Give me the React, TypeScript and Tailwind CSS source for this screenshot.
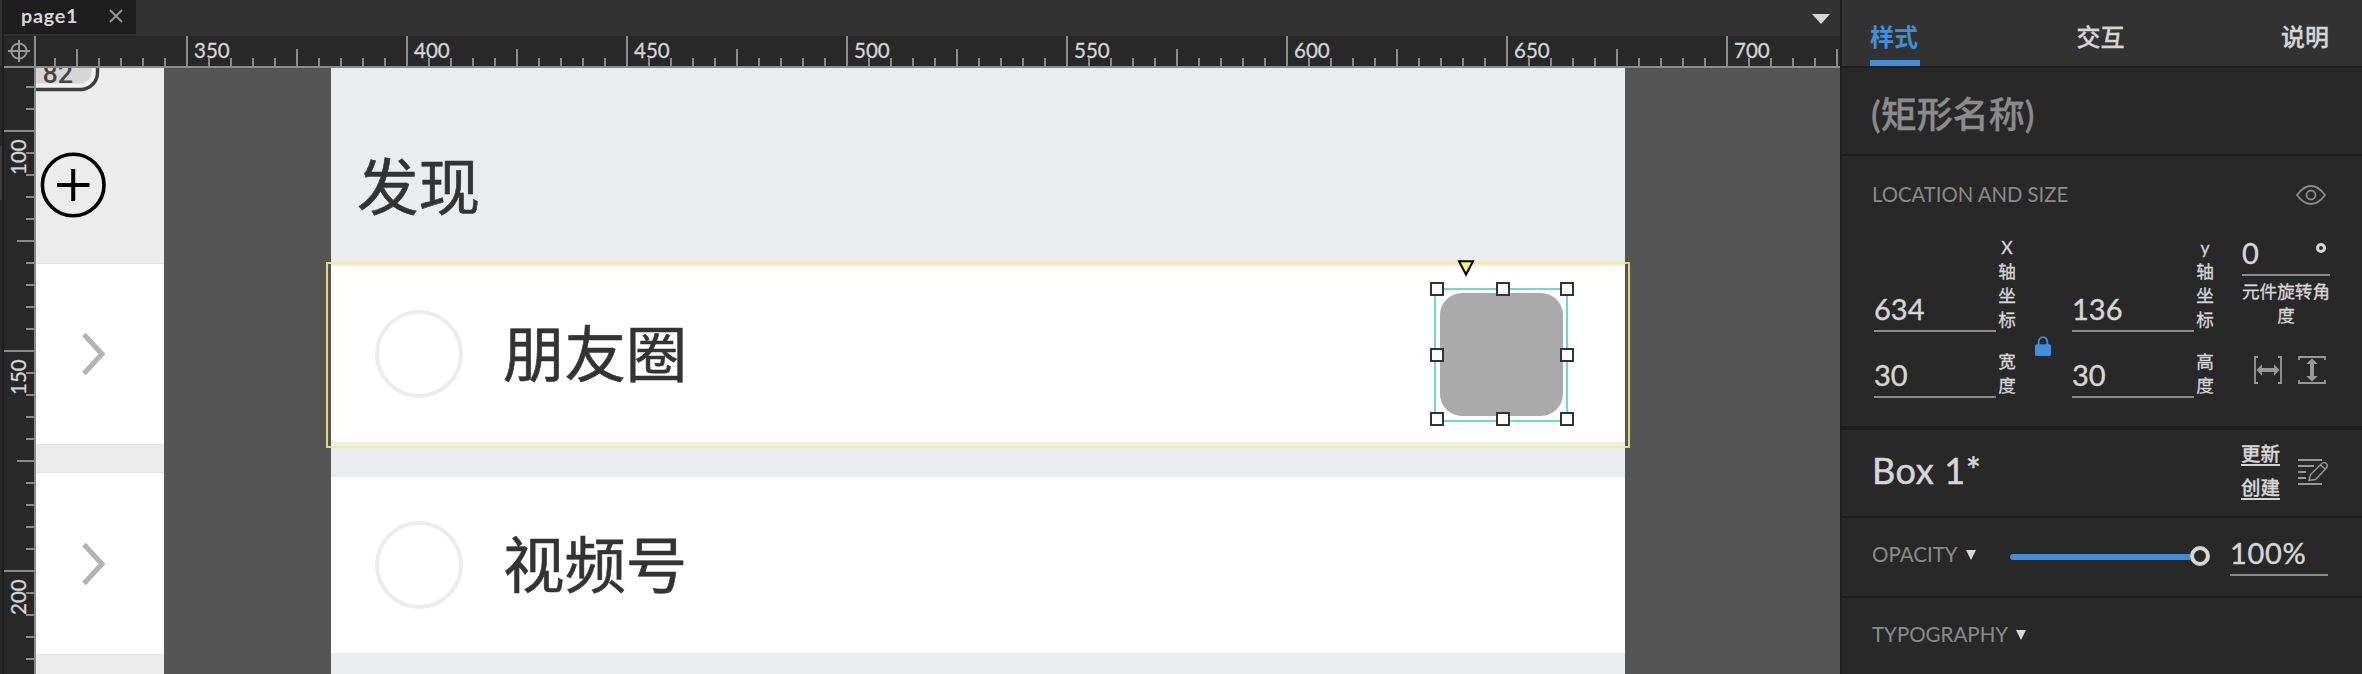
import React from "react";

const LATIN = "font-['Lato','Noto_Sans_CJK_SC',sans-serif]";

function range(from: number, to: number, step: number) {
  const out: number[] = [];
  for (let v = from; v < to; v += step) out.push(v);
  return out;
}

function TopRuler() {
  return (
    <svg width="1836" height="32" viewBox="4 36 1836 32" className="block shrink-0 bg-[#282828]">
      <g stroke="#999999" strokeWidth="2" fill="none">
        <circle cx="19" cy="51" r="7.6" />
        <path d="M8 51H30M19 40V62" />
      </g>
      <rect x="4" y="66" width="1836" height="2" fill="#8b8b8b" />
      <rect x="34" y="36" width="2" height="32" fill="#8b8b8b" />
      {range(54, 1840, 22).map((x, i) => {
        const h = i % 10 === 6 ? 30 : i % 10 === 1 ? 17 : 8;
        return <rect key={x} x={x} y={66 - h} width="2" height={h} fill="#8b8b8b" />;
      })}
      {[350, 400, 450, 500, 550, 600, 650, 700].map((n, i) => (
        <text key={n} x={194 + i * 220} y="58" fontSize="20.5" fill="#d6d6d6" stroke="#d6d6d6" strokeWidth="0.3">
          {n}
        </text>
      ))}
    </svg>
  );
}

function SideRuler() {
  return (
    <svg width="32" height="606" viewBox="4 68 32 606" className="block shrink-0 bg-[#282828]">
      <rect x="34" y="68" width="2" height="606" fill="#8b8b8b" />
      {range(86, 674, 22).map((y, i) => {
        const w = i % 10 === 2 ? 30 : i % 10 === 7 ? 17 : 8;
        return <rect key={y} x={34 - w} y={y} width={w} height="2" fill="#8b8b8b" />;
      })}
      {[100, 150, 200].map((n, i) => (
        <text
          key={n}
          transform={`translate(26.3 ${175 + i * 220}) rotate(-90)`}
          fontSize="20.5"
          fill="#d6d6d6"
          stroke="#d6d6d6"
          strokeWidth="0.3"
        >
          {n}
        </text>
      ))}
    </svg>
  );
}

function Chevron() {
  return (
    <svg width="24" height="44" viewBox="0 0 24 44" className="ml-[45px]" fill="none" stroke="#b3b3b3" strokeWidth="5">
      <path d="M3 2.5L21 22L3 41.5" />
    </svg>
  );
}

function PhoneLeft() {
  return (
    <div className="flex h-full w-[128px] shrink-0 flex-col bg-white">
      <div className="h-[195px] bg-[#ececec]">
        <svg width="128" height="195" viewBox="36 68 128 195" className="block" fill="none">
          <rect x="0" y="45" width="97.5" height="44.5" rx="17" stroke="#3e3e3e" strokeWidth="3.5" fill="#f2f2f2" />
          <rect x="0" y="45" width="92" height="38.5" rx="12" fill="#d6d6d6" />
          <text x="42.5" y="82.8" fontSize="27" fontWeight="500" fill="#444444" fontFamily="Roboto">
            82
          </text>
          <circle cx="73.2" cy="185" r="30.8" stroke="#000" strokeWidth="3.6" />
          <path d="M57 185H89.5M73.2 169V201" stroke="#000" strokeWidth="4" />
        </svg>
      </div>
      <div className="flex h-[181px] items-center border-t border-[#e4e4e4]">
        <Chevron />
      </div>
      <div className="h-[29px] border-y border-[#e2e2e2] bg-[#ececec]" />
      <div className="flex h-[181px] items-center">
        <Chevron />
      </div>
      <div className="h-[20px] border-t border-[#e2e2e2] bg-[#ececec]" />
    </div>
  );
}

function Row({ label, className }: { label: string; className: string }) {
  return (
    <div className={`flex items-center bg-white pl-[44px] ${className}`}>
      <div className="size-[88px] rounded-full border-4 border-[#ebecee]" />
      <span className="ml-[40px] text-[61.4px] leading-none text-[#333] [-webkit-text-stroke:0.6px]">{label}</span>
    </div>
  );
}

function PhoneMain() {
  return (
    <div className="flex h-full w-[1294px] shrink-0 flex-col bg-[#ebecee]">
      <div className="flex h-[198px] items-end pb-[48px] pl-[26px] text-[61.6px] leading-none text-[#333] [-webkit-text-stroke:0.6px]">
        发现
      </div>
      <Row label="朋友圈" className="h-[176px]" />
      <div className="h-[35px]" />
      <Row label="视频号" className="h-[176px]" />
    </div>
  );
}

const HANDLES = [
  "left-[1394px] top-[214px]",
  "left-[1460px] top-[214px]",
  "left-[1524px] top-[214px]",
  "left-[1394px] top-[280px]",
  "left-[1524px] top-[280px]",
  "left-[1394px] top-[344px]",
  "left-[1460px] top-[344px]",
  "left-[1524px] top-[344px]",
];

function Canvas() {
  return (
    <div className="relative flex h-[606px] w-[1804px] overflow-hidden bg-[#555]">
      <PhoneLeft />
      <div className="w-[167px] shrink-0" />
      <PhoneMain />
      <div className="absolute left-[290px] top-[194px] h-[186px] w-[1304px] border-2 border-[#f6ef80]/85" />
      <div className="absolute left-[1404px] top-[225px] size-[123px] rounded-[22px] bg-[#aaa]" />
      <div className="absolute left-[1398px] top-[220px] h-[134px] w-[134px] border-2 border-[#6fd8d2]" />
      {HANDLES.map((pos) => (
        <div key={pos} className={`absolute size-[14px] border-2 border-[#333] bg-white ${pos}`} />
      ))}
      <svg width="18" height="18" viewBox="0 0 18 18" className="absolute left-[1421px] top-[192px]">
        <path d="M2 1.2H16L9 14.5Z" fill="#fbf46d" stroke="#000" strokeWidth="2" />
      </svg>
    </div>
  );
}

function Workspace() {
  return (
    <div className="flex w-[1836px] shrink-0 flex-col">
      <div className="flex h-[36px] items-start justify-between bg-[#323232] pr-[10px]">
        <div className="flex h-[34px] w-[132px] items-center justify-between bg-[#1e1e1e] pb-[2px] pl-[17px] pr-[13px]">
          <span className="pb-[2px] text-[19.8px] font-bold leading-[28px] tracking-[0.7px] text-[#d6d6d6]">page1</span>
          <svg width="14" height="14" viewBox="0 0 14 14" stroke="#999" strokeWidth="1.8">
            <path d="M1 1L13 13M13 1L1 13" />
          </svg>
        </div>
        <svg width="18" height="10" viewBox="0 0 18 10" className="mt-[14px]">
          <path d="M0 0H18L9 10Z" fill="#d6d6d6" />
        </svg>
      </div>
      <TopRuler />
      <div className="flex">
        <SideRuler />
        <Canvas />
      </div>
    </div>
  );
}

function Field({ value, label }: { value: string; label: string[] }) {
  return (
    <div className="flex items-end">
      <div className="flex h-[44px] w-[122px] items-center border-b-2 border-[#8b8b8b] text-[29px] leading-none text-[#d6d6d6]">
        <span className="pb-[2px] [-webkit-text-stroke:0.4px]">{value}</span>
      </div>
      <div className="ml-[2px] flex w-[18px] flex-col items-center text-[17.6px] leading-[24px] text-[#d6d6d6] [-webkit-text-stroke:0.3px]">
        {label.map((c, i) => (
          <span key={i}>{c}</span>
        ))}
      </div>
    </div>
  );
}

function EyeIcon() {
  return (
    <svg width="30" height="20" viewBox="0 0 30 20" fill="none" stroke="#8b8b8b" strokeWidth="1.8">
      <path d="M1 10C5 4.5 9.5 1 15 1S25 4.5 29 10C25 15.5 20.5 19 15 19S5 15.5 1 10Z" />
      <circle cx="15" cy="10" r="4.5" />
    </svg>
  );
}

function FitWidthIcon({ className = "" }: { className?: string }) {
  return (
    <svg width="28" height="28" viewBox="0 0 28 28" className={className} fill="none" stroke="#999">
      <path d="M4 1H1V27H4M24 1H27V27H24" strokeWidth="1.8" />
      <path d="M6 14H22" strokeWidth="4" />
      <path d="M2.5 14L8 8.2V19.8ZM25.5 14L20 8.2V19.8Z" fill="#999" stroke="none" />
    </svg>
  );
}

function StyleEditIcon() {
  return (
    <svg width="30" height="26" viewBox="0 0 30 26" fill="none" stroke="#999">
      <path d="M0 1H24M0 7H16M0 13H8M0 19H8M0 25H24" strokeWidth="2" />
      <path d="M11 21.5L12.5 15.5L23 5.2C25 3 27.5 3.3 28.6 4.8C29.8 6.4 29.5 8 28 9.5L17.5 20.5L11 21.5ZM22.5 6L27.5 10.5" strokeWidth="1.4" />
    </svg>
  );
}

function Caret() {
  return (
    <svg width="10" height="10" viewBox="0 0 10 10">
      <path d="M0 0H10L5 10Z" fill="#d6d6d6" />
    </svg>
  );
}

function Inspector() {
  return (
    <div className="flex h-[674px] w-[520px] shrink-0 flex-col bg-[#282828] text-[#d6d6d6]">
      <div className="flex h-[68px] justify-between border-b-2 border-[#1e1e1e] bg-[#323232] pl-[28px] pr-[33px] pt-[20px] text-[24px] font-medium leading-[34px] [-webkit-text-stroke:0.3px]">
        <div className="h-[46px] w-[50px] border-b-6 border-[#3f8fdc] font-bold text-[#3f8fdc] [-webkit-text-stroke:0px]">样式</div>
        <div>交互</div>
        <div>说明</div>
      </div>
      <div className="flex h-[88px] items-center border-b-2 border-[#1e1e1e] pl-[29px] pt-[5px] text-[36px] font-medium leading-none text-[#8b8b8b] [-webkit-text-stroke:0.4px]">
        (矩形名称)
      </div>
      <div className="h-[274px] border-b-4 border-[#1e1e1e] pl-[30px] pr-[32px] pt-[25px]">
        <div className="flex h-[28px] items-center justify-between pr-[4px] text-[20.3px] text-[#8b8b8b]">
          <span className="pb-px">LOCATION AND SIZE</span>
          <EyeIcon />
        </div>
        <div className="ml-[2px] mt-[23px] flex">
          <div className="grid grid-cols-[142px_56px_142px] grid-rows-[100px_66px]">
            <Field value="634" label={["X", "轴", "坐", "标"]} />
            <div />
            <Field value="136" label={["y", "轴", "坐", "标"]} />
            <Field value="30" label={["宽", "度"]} />
            <div className="flex items-start justify-center pt-[4px]">
              <svg width="18" height="20" viewBox="0 0 18 20" className="-ml-[2px]">
                <path d="M4.7 10V6A4.3 4.8 0 0 1 13.3 6V10" fill="none" stroke="#3f8fdc" strokeWidth="1.8" />
                <rect x="1" y="8.2" width="16" height="11.8" rx="1.6" fill="#3f8fdc" />
              </svg>
            </div>
            <Field value="30" label={["高", "度"]} />
          </div>
          <div className="ml-[28px] flex w-[88px] flex-col">
            <div className="flex h-[44px] items-center justify-between border-b-2 border-[#8b8b8b] pr-[3px] text-[29px] leading-none">
              <span className="pb-[2px] [-webkit-text-stroke:0.4px]">0</span>
              <svg width="12" height="12" viewBox="0 0 12 12" className="mb-[11px]" fill="none" stroke="#d6d6d6" strokeWidth="3">
                <circle cx="6" cy="6" r="3.5" />
              </svg>
            </div>
            <div className="mt-[4px] text-center text-[17.6px] leading-[24px] [-webkit-text-stroke:0.3px]">
              <div className="whitespace-nowrap">元件旋转角</div>
              <div>度</div>
            </div>
            <div className="mt-[28px] flex justify-between pl-[12px] pr-[4px]">
              <FitWidthIcon />
              <FitWidthIcon className="rotate-90" />
            </div>
          </div>
        </div>
      </div>
      <div className="flex h-[88px] items-center border-b-2 border-[#1e1e1e] pb-[2px] pl-[30px] pr-[34px]">
        <span className="pb-[4px] text-[36px] leading-none tracking-[0.6px] [-webkit-text-stroke:0.5px]">Box 1*</span>
        <div className="ml-auto flex flex-col gap-[12.5px] text-[19.5px] font-medium leading-none [-webkit-text-stroke:0.3px]">
          <span className="border-b-2 border-[#d6d6d6]">更新</span>
          <span className="border-b-2 border-[#d6d6d6]">创建</span>
        </div>
        <div className="ml-[18px]">
          <StyleEditIcon />
        </div>
      </div>
      <div className="flex h-[80px] items-start border-b-2 border-[#1e1e1e] pl-[30px]">
        <span className="w-[94px] pt-[24px] text-[20.5px] leading-[25px] text-[#8b8b8b]">OPACITY</span>
        <div className="pt-[32px]">
          <Caret />
        </div>
        <div className="ml-[34px] flex w-[200px] items-center pt-[28px]">
          <div className="mt-[2px] h-[6px] w-[181px] rounded-l-full bg-[#3f8fdc]" />
          <div className="size-[20px] rounded-full border-4 border-[#d6d6d6] bg-[#282828]" />
        </div>
        <div className="ml-[20px] mt-[14px] flex h-[44px] w-[98px] items-center border-b-2 border-[#8b8b8b] text-[29px] leading-none tracking-[0.7px]">
          <span className="pb-[2px] [-webkit-text-stroke:0.4px]">100%</span>
        </div>
      </div>
      <div className="flex h-[76px] items-start pl-[30px]">
        <span className="w-[144px] pt-[24px] text-[20.5px] leading-[25px] text-[#8b8b8b]">TYPOGRAPHY</span>
        <div className="pt-[32px]">
          <Caret />
        </div>
      </div>
    </div>
  );
}

export default function App() {
  return (
    <div className={`flex h-[674px] w-[2362px] overflow-hidden bg-[#1e1e1e] ${LATIN}`}>
      <div className="flex w-[2px] shrink-0 flex-col bg-[#282828]">
        <div className="h-[66px] bg-[#323232]" />
        <div className="mt-[80px] h-[54px] bg-[#3c3c3c]" />
      </div>
      <div className="w-[2px] shrink-0 bg-[#1e1e1e]" />
      <Workspace />
      <div className="w-[2px] shrink-0 bg-[#1e1e1e]" />
      <Inspector />
    </div>
  );
}
